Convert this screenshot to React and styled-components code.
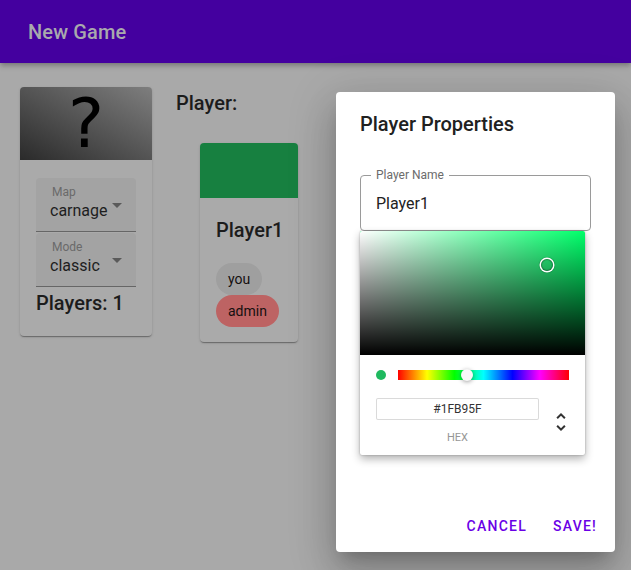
import styled, { createGlobalStyle } from "styled-components";

const GlobalStyle = createGlobalStyle`
  body {
    margin: 0;
    background: #a9a9a9;
    font-family: Roboto, "Liberation Sans", sans-serif;
  }
`;

const AppBar = styled.header`
  height: 63px;
  background: #44009f;
  display: flex;
  align-items: center;
  padding-left: 28px;
  box-shadow: 0 2px 4px -1px rgba(0, 0, 0, 0.2), 0 4px 5px rgba(0, 0, 0, 0.14);
`;

const AppTitle = styled.h1`
  margin: 0;
  font-size: 20px;
  font-weight: 500;
  letter-spacing: 0.15px;
  color: #a9a9ad;
`;

const Main = styled.main`
  display: flex;
  align-items: flex-start;
  gap: 24px;
  padding: 24px 20px;
`;

const Card = styled.div`
  width: ${props => props.width}px;
  background: #aaaaaa;
  border-radius: 4px;
  box-shadow: 0 2px 1px -1px rgba(0, 0, 0, 0.2), 0 1px 1px 0 rgba(0, 0, 0, 0.14),
    0 1px 3px 0 rgba(0, 0, 0, 0.12);
`;

const MapImage = styled.div`
  height: 73px;
  display: flex;
  justify-content: center;
  align-items: center;
  border-radius: 4px 4px 0 0;
  background: linear-gradient(to top right, #2a2a2a, #7e7e7e);
  font-family: "DejaVu Sans", sans-serif;
  font-size: 68px;
  color: #000;
`;

const CardBody = styled.div`
  padding: ${props => props.pad || "18px 16px 17px"};
`;

const Select = styled.div`
  position: relative;
  height: 54px;
  box-sizing: border-box;
  padding: 21px 0 0 14px;
  background: #a3a3a3;
  border-top-left-radius: 4px;
  border-top-right-radius: 4px;
  border-bottom: 1px solid #666;
  margin-bottom: ${props => (props.last ? "0" : "1px")};
`;

const SelectLabel = styled.span`
  position: absolute;
  left: 16px;
  top: 8px;
  font-size: 12px;
  line-height: 12px;
  color: #6a6a6a;
`;

const SelectValue = styled.div`
  font-size: 16px;
  line-height: 23px;
  color: #1e1e1e;
`;

const DropIcon = styled.svg`
  position: absolute;
  right: 7px;
  top: 15px;
  width: 24px;
  height: 24px;
  fill: #5a5a5a;
`;

const Heading = styled.div`
  font-size: 20px;
  font-weight: 500;
  line-height: 32px;
  color: #1c1c1c;
`;

const PlayerSection = styled.section`
  display: flex;
  flex-direction: column;
`;

const PlayerCard = styled(Card)`
  margin: 24px 0 0 24px;
`;

const Swatch = styled.div`
  height: 55px;
  border-radius: 4px 4px 0 0;
  background: ${props => props.color};
`;

const Chips = styled.div`
  display: flex;
  flex-wrap: wrap;
  margin-top: 17px;
`;

const Chip = styled.span`
  height: 32px;
  padding: 0 12px;
  border-radius: 16px;
  display: inline-flex;
  align-items: center;
  font-size: 14px;
  color: #151010;
  background: ${props => (props.danger ? "#bd6363" : "#9f9f9f")};
`;

const Dialog = styled.div`
  position: absolute;
  left: 336px;
  top: 92px;
  width: 279px;
  height: 460px;
  display: flex;
  flex-direction: column;
  background: #fff;
  border-radius: 4px;
  box-shadow: 0 11px 15px -7px rgba(0, 0, 0, 0.2), 0 24px 38px 3px rgba(0, 0, 0, 0.14),
    0 9px 46px 8px rgba(0, 0, 0, 0.12);
`;

const DialogTitle = styled.h2`
  margin: 0;
  padding: 16px 24px;
  font-size: 20px;
  font-weight: 500;
  line-height: 32px;
  color: #212121;
`;

const DialogContent = styled.div`
  position: relative;
  padding: 19px 24px 0;
`;

const Field = styled.div`
  position: relative;
  height: 56px;
  box-sizing: border-box;
  border: 1px solid #9a9a9a;
  border-radius: 4px;
  display: flex;
  align-items: center;
  padding: 1px 0 0 15px;
  font-size: 16px;
  color: #222;
`;

const FieldLabel = styled.span`
  position: absolute;
  left: 10px;
  top: -8px;
  padding: 0 5px;
  background: #fff;
  font-size: 12px;
  line-height: 14px;
  color: #6b6b6b;
`;

const Picker = styled.div`
  position: absolute;
  left: 24px;
  top: 139px;
  width: 225px;
  background: #fff;
  border-radius: 2px;
  overflow: hidden;
  box-shadow: 0 0 2px rgba(0, 0, 0, 0.3), 0 4px 8px rgba(0, 0, 0, 0.3);
`;

const Saturation = styled.div`
  position: relative;
  height: 124px;
  background: linear-gradient(to top, #000, rgba(0, 0, 0, 0)),
    linear-gradient(to right, #fff, rgba(255, 255, 255, 0)), hsl(${props => props.hue}, 100%, 50%);
`;

const SatPointer = styled.div`
  position: absolute;
  width: 12px;
  height: 12px;
  margin: -6px 0 0 -6px;
  border-radius: 50%;
  box-shadow: 0 0 0 1.5px #fff, inset 0 0 1px 1px rgba(0, 0, 0, 0.3), 0 0 1px 2px rgba(0, 0, 0, 0.2);
`;

const PickerBody = styled.div`
  padding: 15px 16px 12px;
`;

const Controls = styled.div`
  display: flex;
  align-items: center;
`;

const Dot = styled.div`
  width: 10px;
  height: 10px;
  border-radius: 50%;
  margin-right: 12px;
  background: ${props => props.color};
`;

const Hue = styled.div`
  position: relative;
  flex: 1;
  height: 10px;
  background: linear-gradient(to right, #f00 0%, #ff0 17%, #0f0 33%, #0ff 50%, #00f 67%, #f0f 83%, #f00 100%);
`;

const HueThumb = styled.div`
  position: absolute;
  top: -1px;
  width: 12px;
  height: 12px;
  margin-left: -6px;
  border-radius: 50%;
  background: #f8f8f8;
  box-shadow: 0 1px 4px rgba(0, 0, 0, 0.37);
`;

const Fields = styled.div`
  display: flex;
  margin-top: 18px;
`;

const HexField = styled.div`
  flex: 1;
  display: flex;
  flex-direction: column;
  align-items: center;
`;

const HexInput = styled.div`
  width: 100%;
  height: 22px;
  box-sizing: border-box;
  border-radius: 2px;
  box-shadow: inset 0 0 0 1px #dadada;
  font-size: 12px;
  line-height: 22px;
  text-align: center;
  color: #333;
`;

const HexLabel = styled.span`
  margin-top: 12px;
  font-size: 11px;
  line-height: 11px;
  text-transform: uppercase;
  color: #969696;
`;

const Toggle = styled.div`
  width: 30px;
  display: flex;
  justify-content: flex-end;
  svg {
    width: 24px;
    height: 24px;
    margin: 12px -4px 0 0;
    fill: #333;
  }
`;

const Actions = styled.div`
  margin-top: auto;
  display: flex;
  justify-content: flex-end;
  gap: 8px;
  padding: 8px;
`;

const TextButton = styled.button`
  min-width: 64px;
  padding: 6px 8px;
  border: 0;
  background: none;
  font-family: inherit;
  font-size: 14px;
  font-weight: 500;
  line-height: 24px;
  letter-spacing: 1.25px;
  text-transform: uppercase;
  color: #6a00e6;
`;

const ArrowDrop = () => (
  <DropIcon viewBox="0 0 24 24">
    <path d="M7 10l5 5 5-5z" />
  </DropIcon>
);

const App = () => {
  const color = "#1FB95F";
  const hue = 145;
  return (
    <>
      <GlobalStyle />
      <AppBar>
        <AppTitle>New Game</AppTitle>
      </AppBar>
      <Main>
        <Card width={132}>
          <MapImage>?</MapImage>
          <CardBody>
            <Select>
              <SelectLabel>Map</SelectLabel>
              <SelectValue>carnage</SelectValue>
              <ArrowDrop />
            </Select>
            <Select last>
              <SelectLabel>Mode</SelectLabel>
              <SelectValue>classic</SelectValue>
              <ArrowDrop />
            </Select>
            <Heading>Players: 1</Heading>
          </CardBody>
        </Card>
        <PlayerSection>
          <Heading>Player:</Heading>
          <PlayerCard width={98}>
            <Swatch color="#178040" />
            <CardBody pad="16px 16px 15px">
              <Heading>Player1</Heading>
              <Chips>
                <Chip>you</Chip>
                <Chip danger>admin</Chip>
              </Chips>
            </CardBody>
          </PlayerCard>
        </PlayerSection>
      </Main>

      <Dialog>
        <DialogTitle>Player Properties</DialogTitle>
        <DialogContent>
          <Field>
            <FieldLabel>Player Name</FieldLabel>
            Player1
          </Field>
        </DialogContent>
        <Picker>
          <Saturation hue={hue}>
            <SatPointer style={{ left: "83%", top: "27.5%" }} />
          </Saturation>
          <PickerBody>
            <Controls>
              <Dot color={color} />
              <Hue>
                <HueThumb style={{ left: `${(hue / 360) * 100}%` }} />
              </Hue>
            </Controls>
            <Fields>
              <HexField>
                <HexInput>{color}</HexInput>
                <HexLabel>hex</HexLabel>
              </HexField>
              <Toggle>
                <svg viewBox="0 0 24 24">
                  <path d="M12,5.83L15.17,9L16.58,7.59L12,3L7.41,7.59L8.83,9L12,5.83Z" />
                  <path d="M12,18.17L8.83,15L7.42,16.41L12,21L16.59,16.41L15.17,15L12,18.17Z" />
                </svg>
              </Toggle>
            </Fields>
          </PickerBody>
        </Picker>
        <Actions>
          <TextButton>Cancel</TextButton>
          <TextButton>Save!</TextButton>
        </Actions>
      </Dialog>
    </>
  );
};

export default App;
